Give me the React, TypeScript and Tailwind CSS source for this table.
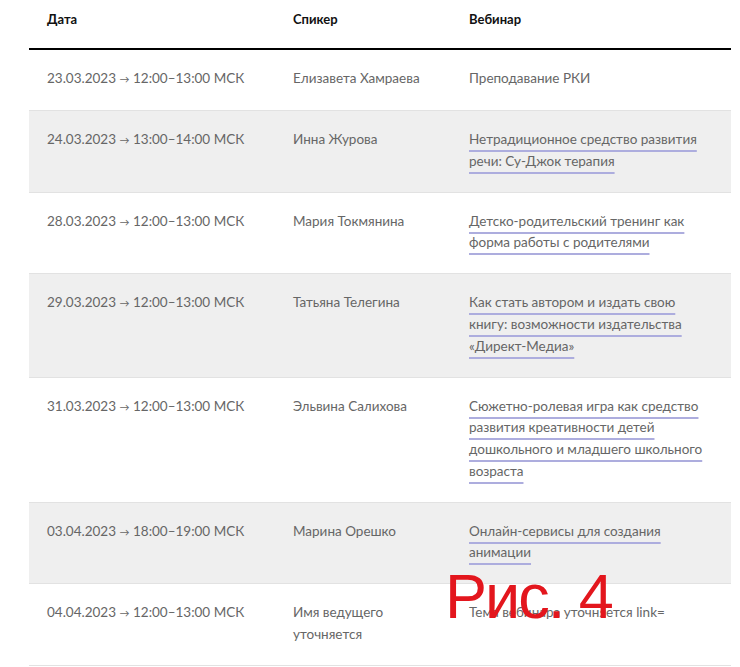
import React from 'react';

type Row = {
  date: string;
  time: string;
  speaker: string;
  title: string;
  link?: boolean;
};

const rows: Row[] = [
  { date: '23.03.2023', time: '12:00–13:00 МСК', speaker: 'Елизавета Хамраева', title: 'Преподавание РКИ' },
  { date: '24.03.2023', time: '13:00–14:00 МСК', speaker: 'Инна Журова', title: 'Нетрадиционное средство развития речи: Су-Джок терапия', link: true },
  { date: '28.03.2023', time: '12:00–13:00 МСК', speaker: 'Мария Токмянина', title: 'Детско-родительский тренинг как форма работы с родителями', link: true },
  { date: '29.03.2023', time: '12:00–13:00 МСК', speaker: 'Татьяна Телегина', title: 'Как стать автором и издать свою книгу: возможности издательства «Директ-Медиа»', link: true },
  { date: '31.03.2023', time: '12:00–13:00 МСК', speaker: 'Эльвина Салихова', title: 'Сюжетно-ролевая игра как средство развития креативности детей дошкольного и младшего школьного возраста', link: true },
  { date: '03.04.2023', time: '18:00–19:00 МСК', speaker: 'Марина Орешко', title: 'Онлайн-сервисы для создания анимации', link: true },
  { date: '04.04.2023', time: '12:00–13:00 МСК', speaker: 'Имя ведущего уточняется', title: 'Тема вебинара уточняется link=' },
];

export default function App() {
  return (
    <div className="relative w-[740px] h-[667px] overflow-hidden bg-white font-['Lato',sans-serif]">
      <div className="ml-[29px] w-[702px]">
        {/* Header */}
        <div className="grid grid-cols-[246px_176px_1fr] h-[50px] border-b-[2px] border-black text-[13px] font-bold text-[#111]">
          <div className="pl-[18px] pt-[10px]">Дата</div>
          <div className="pl-[18px] pt-[10px]">Спикер</div>
          <div className="pl-[18px] pt-[10px]">Вебинар</div>
        </div>

        {/* Rows */}
        {rows.map((r, i) => (
          <div
            key={i}
            className={`grid grid-cols-[246px_176px_1fr] border-b border-[#e2e2e2] pt-[18px] pb-[19.5px] text-[13.5px] leading-[21.6px] text-[#666] ${i % 2 === 1 ? 'bg-[#efefef]' : 'bg-white'}`}
          >
            <div className="pl-[18px] whitespace-nowrap">
              {r.date} <span className="text-[10px]">→</span> {r.time}
            </div>
            <div className="pl-[18px] pr-[30px]">{r.speaker}</div>
            <div className="pl-[18px] pr-[20px]">
              {r.link ? (
                <span className="underline decoration-[#adadde] decoration-2 underline-offset-[6px]">{r.title}</span>
              ) : (
                r.title
              )}
            </div>
          </div>
        ))}
      </div>

      {/* Figure label */}
      <div className="absolute left-[445px] top-[565px] text-[63px] leading-none tracking-[-2px] text-[#e3161d] font-['Liberation_Sans',sans-serif]">
        Рис. 4
      </div>
    </div>
  );
}
